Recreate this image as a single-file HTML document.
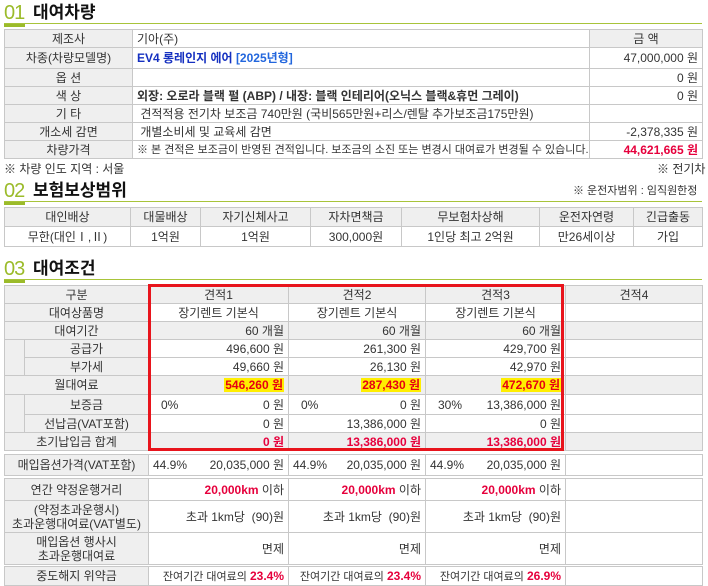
<!DOCTYPE html>
<html><head><meta charset="utf-8">
<style>
*{margin:0;padding:0;box-sizing:border-box}
body{width:708px;height:586px;background:#fff;font-family:"Liberation Sans","Noto Sans CJK KR",sans-serif;font-size:12px;color:#333;position:relative;overflow:hidden}
.h{position:absolute;left:4px;width:698px;border-bottom:1px solid #a8c43a;height:22px}
.h .n{position:absolute;left:0;top:0;font-size:20px;color:#9bbb2a;line-height:22px;border-bottom:3px solid #9bbb2a;height:25px;width:21px;letter-spacing:-1px}
.h .t{position:absolute;left:29px;top:0px;font-size:17px;font-weight:bold;color:#111;line-height:21px}
table{position:absolute;border-collapse:collapse;table-layout:fixed}
td{border:1px solid #c8c8c8;padding:0 4px;white-space:nowrap;overflow:hidden;line-height:14px}
.g{background:#efefef;text-align:center}
.c{text-align:center}
.r{text-align:right}
.red{color:#e6003c;font-weight:bold}
.yl{background:#ffee00;color:#e60012;font-weight:bold;padding:0 1px}
.b{font-weight:bold}
.blue{color:#1530c0;font-weight:bold}
.blue2{color:#2266dd}
.note{position:absolute;font-size:12px;line-height:14px}
.box{position:absolute;left:148px;top:284px;width:416px;height:167px;border:3px solid #e8141c}
</style></head><body>

<div class="h" style="top:2px"><span class="n">01</span><span class="t">대여차량</span></div>
<table style="left:4px;top:29px;width:698px">
<colgroup><col style="width:128px"><col style="width:457px"><col style="width:113px"></colgroup>
<tr style="height:18px"><td class="g">제조사</td><td>기아(주)</td><td class="g">금 액</td></tr>
<tr style="height:21px"><td class="g">차종(차량모델명)</td><td><span class="blue">EV4 롱레인지 에어 </span><span class="blue2 b">[2025년형]</span></td><td class="r">47,000,000 원</td></tr>
<tr style="height:18px"><td class="g">옵 션</td><td></td><td class="r">0 원</td></tr>
<tr style="height:18px"><td class="g">색 상</td><td class="b">외장: 오로라 블랙 펄 (ABP) / 내장: 블랙 인테리어(오닉스 블랙&amp;휴먼 그레이)</td><td class="r">0 원</td></tr>
<tr style="height:18px"><td class="g">기 타</td><td>&nbsp;견적적용 전기차 보조금 740만원 (국비565만원+리스/렌탈 추가보조금175만원)</td><td></td></tr>
<tr style="height:18px"><td class="g">개소세 감면</td><td>&nbsp;개별소비세 및 교육세 감면</td><td class="r">-2,378,335 원</td></tr>
<tr style="height:18px"><td class="g">차량가격</td><td style="font-size:11px">※ 본 견적은 보조금이 반영된 견적입니다. 보조금의 소진 또는 변경시 대여료가 변경될 수 있습니다.</td><td class="r red">44,621,665 원</td></tr>
</table>
<div class="note" style="left:4px;top:162px">※ 차량 인도 지역 : 서울</div>
<div class="note" style="left:657px;top:162px">※ 전기차</div>

<div class="h" style="top:180px"><span class="n">02</span><span class="t">보험보상범위</span></div>
<div class="note" style="left:573px;top:184px;font-size:11px">※ 운전자범위 : 임직원한정</div>
<table style="left:4px;top:207px;width:698px">
<colgroup><col style="width:126px"><col style="width:70px"><col style="width:110px"><col style="width:91px"><col style="width:138px"><col style="width:94px"><col style="width:69px"></colgroup>
<tr style="height:19px"><td class="g">대인배상</td><td class="g">대물배상</td><td class="g">자기신체사고</td><td class="g">자차면책금</td><td class="g">무보험차상해</td><td class="g">운전자연령</td><td class="g">긴급출동</td></tr>
<tr style="height:20px"><td class="c">무한(대인Ⅰ,Ⅱ)</td><td class="c">1억원</td><td class="c">1억원</td><td class="c">300,000원</td><td class="c">1인당 최고 2억원</td><td class="c">만26세이상</td><td class="c">가입</td></tr>
</table>

<div class="h" style="top:258px"><span class="n">03</span><span class="t">대여조건</span></div>
<table style="left:4px;top:285px;width:698px">
<colgroup><col style="width:20px"><col style="width:124px"><col style="width:140px"><col style="width:137px"><col style="width:140px"><col style="width:137px"></colgroup>
<tr style="height:18px"><td class="g" colspan="2">구분</td><td class="g">견적1</td><td class="g">견적2</td><td class="g">견적3</td><td class="g">견적4</td></tr>
<tr style="height:18px"><td class="g" colspan="2">대여상품명</td><td class="c">장기렌트 기본식</td><td class="c">장기렌트 기본식</td><td class="c">장기렌트 기본식</td><td></td></tr>
<tr style="height:18px" class="g"><td colspan="2">대여기간</td><td class="r">60 개월</td><td class="r">60 개월</td><td class="r">60 개월</td><td></td></tr>
<tr style="height:18px"><td class="g" rowspan="2"></td><td class="g">공급가</td><td class="r">496,600 원</td><td class="r">261,300 원</td><td class="r">429,700 원</td><td></td></tr>
<tr style="height:18px"><td class="g">부가세</td><td class="r">49,660 원</td><td class="r">26,130 원</td><td class="r">42,970 원</td><td></td></tr>
<tr style="height:19px" class="g"><td colspan="2">월대여료</td><td class="r"><span class="yl">546,260 원</span></td><td class="r"><span class="yl">287,430 원</span></td><td class="r"><span class="yl">472,670 원</span></td><td></td></tr>
<tr style="height:20px"><td class="g" rowspan="2"></td><td class="g">보증금</td><td class="r"><span style="float:left;padding-left:8px">0%</span>0 원</td><td class="r"><span style="float:left;padding-left:8px">0%</span>0 원</td><td class="r"><span style="float:left;padding-left:8px">30%</span>13,386,000 원</td><td></td></tr>
<tr style="height:18px"><td class="g">선납금(VAT포함)</td><td class="r">0 원</td><td class="r">13,386,000 원</td><td class="r">0 원</td><td></td></tr>
<tr style="height:18px" class="g"><td colspan="2">초기납입금 합계</td><td class="r red">0 원</td><td class="r red">13,386,000 원</td><td class="r red">13,386,000 원</td><td></td></tr>
</table>
<div class="box"></div>

<table style="left:4px;top:454px;width:698px">
<colgroup><col style="width:144px"><col style="width:140px"><col style="width:137px"><col style="width:140px"><col style="width:137px"></colgroup>
<tr style="height:21px"><td class="g">매입옵션가격(VAT포함)</td><td class="r"><span style="float:left">44.9%</span>20,035,000 원</td><td class="r"><span style="float:left">44.9%</span>20,035,000 원</td><td class="r"><span style="float:left">44.9%</span>20,035,000 원</td><td></td></tr>
</table>
<table style="left:4px;top:478px;width:698px">
<colgroup><col style="width:144px"><col style="width:140px"><col style="width:137px"><col style="width:140px"><col style="width:137px"></colgroup>
<tr style="height:22px"><td class="g">연간 약정운행거리</td><td class="r"><span class="red">20,000km</span> 이하</td><td class="r"><span class="red">20,000km</span> 이하</td><td class="r"><span class="red">20,000km</span> 이하</td><td></td></tr>
<tr style="height:32px"><td class="g">(약정초과운행시)<br>초과운행대여료(VAT별도)</td><td class="r">초과 1km당 &nbsp;(90)원</td><td class="r">초과 1km당 &nbsp;(90)원</td><td class="r">초과 1km당 &nbsp;(90)원</td><td></td></tr>
<tr style="height:32px"><td class="g">매입옵션 행사시<br>초과운행대여료</td><td class="r">면제</td><td class="r">면제</td><td class="r">면제</td><td></td></tr>
</table>
<table style="left:4px;top:566px;width:698px">
<colgroup><col style="width:144px"><col style="width:140px"><col style="width:137px"><col style="width:140px"><col style="width:137px"></colgroup>
<tr style="height:19px"><td class="g">중도해지 위약금</td><td class="r" style="font-size:11px">잔여기간 대여료의 <span class="red" style="font-size:12px">23.4%</span></td><td class="r" style="font-size:11px">잔여기간 대여료의 <span class="red" style="font-size:12px">23.4%</span></td><td class="r" style="font-size:11px">잔여기간 대여료의 <span class="red" style="font-size:12px">26.9%</span></td><td></td></tr>
</table>
</body></html>
